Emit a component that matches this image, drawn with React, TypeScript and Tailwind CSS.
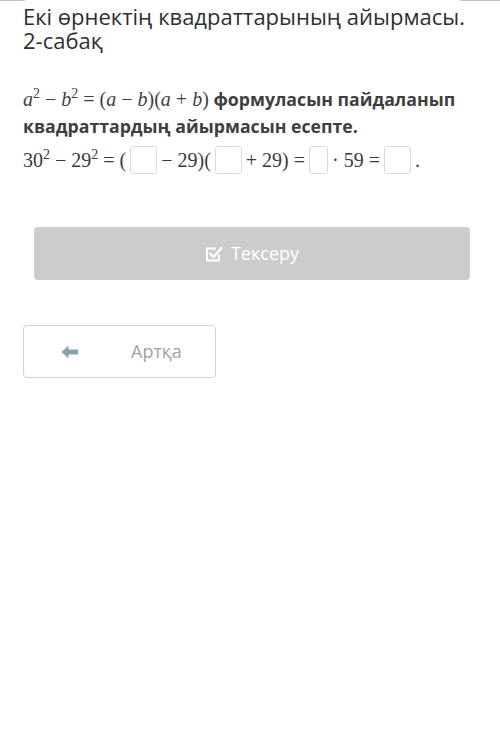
import React from 'react';

const serif = { fontFamily: '"Liberation Serif", "DejaVu Serif", serif' };

function Sup({ children }: { children: React.ReactNode }) {
  return <span className="not-italic text-[14px] align-[8px] leading-none">{children}</span>;
}

function Box({ w }: { w: string }) {
  return (
    <span
      className={`inline-block ${w} h-[28px] mx-[4px] align-middle rounded-[3px] border border-[#dcdcdc] bg-white`}
    />
  );
}

export default function App() {
  return (
    <div className="w-[500px] min-h-[742px] bg-white font-['Open_Sans',sans-serif] text-[#333]">
      <div className="flex h-px">
        <div className="w-[25px] bg-[#b9c2c6]" />
        <div className="flex-1" />
        <div className="w-[40px] bg-[#b9c2c6]" />
      </div>
      <div className="px-[23px]">
        <h1 className="pt-[3px] text-[22px] leading-[24px] font-normal text-[#2f2f2f]">
          Екі өрнектің квадраттарының айырмасы. 2-сабақ
        </h1>

        <p className="mt-[34px] text-[17.7px] leading-[27px] font-bold text-[#3f3f3f]">
          <span className="font-normal italic text-[20px]" style={serif}>
            a<Sup>2</Sup>
            <span className="not-italic"> − </span>b<Sup>2</Sup>
            <span className="not-italic"> = (</span>a<span className="not-italic"> − </span>b
            <span className="not-italic">)(</span>a<span className="not-italic"> + </span>b
            <span className="not-italic">)</span>
          </span>{' '}
          формуласын пайдаланып квадраттардың айырмасын есепте.
        </p>

        <div className="mt-[5px] flex items-center text-[20px] text-[#3a3a3a]" style={serif}>
          <span>
            30<Sup>2</Sup> − 29<Sup>2</Sup> = (
          </span>
          <Box w="w-[27px]" />
          <span>− 29)(</span>
          <Box w="w-[27px]" />
          <span>+ 29) =</span>
          <Box w="w-[19px]" />
          <span>· 59 =</span>
          <Box w="w-[27px]" />
          <span>.</span>
        </div>

        <div className="mt-[52px] ml-[11px] mr-[7px] h-[53px] rounded-[4px] bg-[#cccccc] flex items-center justify-center gap-[8px] text-white text-[18px]">
          <svg width="18" height="18" viewBox="0 0 18 18" fill="none" stroke="white" strokeWidth="2">
            <path d="M14 9.5V15.5H2V3.5H11" strokeLinejoin="round" />
            <path d="M5 8.5L8.5 12L16.5 3" strokeLinecap="round" strokeLinejoin="round" strokeWidth="2.4" />
          </svg>
          <span>Тексеру</span>
        </div>

        <div className="mt-[45px] w-[193px] h-[53px] rounded-[4px] border border-[#d3d3d3] flex items-center">
          <svg className="ml-[37px]" width="18" height="14" viewBox="0 0 18 14" fill="#8aa1ab">
            <path d="M7.5 0.5L0.5 7L7.5 13.5V9.5H17V4.5H7.5Z" />
          </svg>
          <span className="ml-[52px] text-[18px] text-[#a3a3a3]">Артқа</span>
        </div>
      </div>
    </div>
  );
}
